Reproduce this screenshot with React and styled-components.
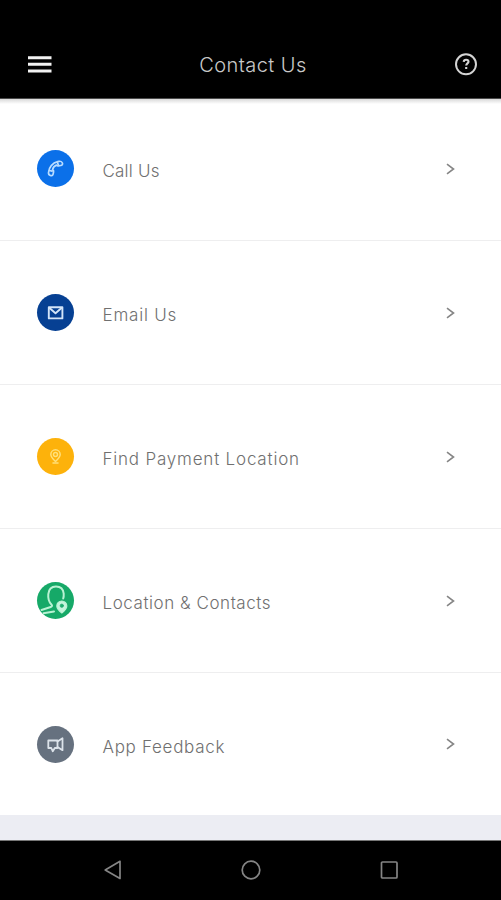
import styled, { createGlobalStyle } from 'styled-components';

const GlobalStyle = createGlobalStyle`
  * {
    box-sizing: border-box;
  }
  body {
    margin: 0;
    font-family: Inter, 'Liberation Sans', sans-serif;
  }
`;

const Screen = styled.div`
  display: flex;
  flex-direction: column;
  height: 900px;
  overflow: hidden;
  background: #ecedf3;
`;

const Header = styled.header`
  display: flex;
  align-items: center;
  justify-content: space-between;
  flex: none;
  height: 99px;
  padding: 30px 23px 0 27px;
  background: #000;
  border-bottom: 1px solid #4a4a4a;
`;

const IconButton = styled.button`
  display: flex;
  padding: 0;
  border: 0;
  background: none;
`;

const Title = styled.h1`
  margin: 0;
  padding-top: 2px;
  color: #c8c8c8;
  font-size: 20px;
  font-weight: 300;
  line-height: 24px;
  letter-spacing: 0.45px;
`;

const List = styled.main`
  flex: none;
  background: linear-gradient(#d9d9d9, #fff 5px);
`;

const Row = styled.a`
  display: flex;
  align-items: center;
  height: 144px;
  padding: 0 45px 0 37px;
  border-bottom: 1px solid #eeeeef;

  &:first-child {
    height: 142px;
    padding-bottom: 2px;
  }

  &:last-child {
    height: 142px;
    border-bottom: 0;
  }
`;

const Badge = styled.span`
  display: flex;
  flex: none;
  width: 37px;
  height: 37px;
  border-radius: 50%;
  overflow: hidden;
  background: ${({ $color }) => $color};
`;

const Label = styled.span`
  flex: 1;
  padding: 5px 0 0 28.5px;
  color: #707070;
  font-size: 17px;
  font-weight: 300;
  line-height: 20px;
  letter-spacing: ${({ $spacing }) => $spacing}px;
  white-space: nowrap;
`;

const NavBar = styled.nav`
  display: flex;
  align-items: center;
  justify-content: space-between;
  flex: none;
  height: 60px;
  margin-top: auto;
  padding: 0 102px 2px;
  background: #000;
  border-top: 1px solid #777;
`;

const Glyph = ({ children, color = '#dcecff', width = 1.4 }) => (
  <svg
    width='37'
    height='37'
    viewBox='0 0 37 37'
    fill='none'
    stroke={color}
    strokeWidth={width}
    strokeLinecap='round'
    strokeLinejoin='round'
  >
    {children}
  </svg>
);

const PhoneIcon = () => (
  <Glyph color='#b9dcff' width={1.7}>
    <path d='M11.500 22.500c.3-5.200 4-9.600 9.200-10.800l1.200-.3c1.500-.4 3.200.5 3.600 1.900.3 1.200-.5 2-1.700 2.200l-2.400.4c-1 .2-1.500-.2-2-.8-1.900.8-3.400 2.600-3.900 4.800.8.300 1.300.9 1.100 1.800l-.5 2.400c-.3 1.300-1.500 1.900-2.700 1.400-1.400-.5-2-1.700-1.900-3Z' />
    <path d='M20.500 12.500l.9 2.800M12.300 20.500l2.800.6' />
  </Glyph>
);

const MailIcon = () => (
  <Glyph color='#d3e4f8' width={1.9}>
    <rect x='11.800' y='13.200' width='13.600' height='11.200' />
    <path d='M12.500 14l6 5.200 6-5.200' />
  </Glyph>
);

const PinIcon = () => (
  <Glyph color='#ffe07a' width={1.5}>
    <path d='M18.500 23.500c-3-2.800-4.700-4.700-4.700-7a4.700 4.700 0 0 1 9.400 0c0 2.300-1.700 4.200-4.700 7Z' />
    <circle cx='18.500' cy='16.500' r='2' />
    <path d='M16 25h5' />
  </Glyph>
);

const ContactIcon = () => (
  <Glyph color='#b9f2d3' width={2}>
    <path d='M4.500 28l9.200-3c1.200-.4 1.800-1.300.9-2.200-2.700-2.600-3.700-6.400-3.300-10.600.4-4.600 3.200-7.700 7.700-7.700s7.300 3 7.700 7.200c.1 1.600 0 3.300-.5 4.800' />
    <path d='M6.500 31.300L17 29.500' />
    <path
      d='M24.800 31c-3.200-2.500-5-4.500-5-7a5 5 0 0 1 10 0c0 2.500-1.800 4.500-5 7Z'
      fill='#c5f4dc'
      strokeWidth='1.200'
    />
    <circle cx='24.800' cy='23.700' r='1.700' fill='#20ad70' stroke='#20ad70' strokeWidth='.6' />
  </Glyph>
);

const FeedbackIcon = () => (
  <Glyph color='#dce3ea' width={1.8}>
    <path d='M11.300 14.500h9.200v7.500h-2.700l-2 3.300-1.500-3.300h-3Z' />
    <path d='M20.500 15.500l5-3.300v12l-5-3.200' />
  </Glyph>
);

const items = [
  { label: 'Call Us', color: '#0b70e9', icon: PhoneIcon, spacing: 0.2 },
  { label: 'Email Us', color: '#064093', icon: MailIcon, spacing: 0.8 },
  { label: 'Find Payment Location', color: '#fdb20b', icon: PinIcon, spacing: 0.8 },
  { label: 'Location & Contacts', color: '#16a968', icon: ContactIcon, spacing: 0.55 },
  { label: 'App Feedback', color: '#66717f', icon: FeedbackIcon, spacing: 0.7 },
];

const App = () => (
  <Screen>
    <GlobalStyle />
    <Header>
      <IconButton aria-label='Menu'>
        <svg width='25' height='18' viewBox='0 0 25 18' fill='#f2f2f2'>
          <path d='M1 1.200h23.500v3H1zM1 7.800h23.500v3H1zM1 14.400h23.500v3H1z' />
        </svg>
      </IconButton>
      <Title>Contact Us</Title>
      <IconButton aria-label='Help'>
        <svg width='24' height='24' viewBox='0 0 24 24' fill='none' stroke='#d4d4d4'>
          <circle cx='12' cy='12.300' r='10' strokeWidth='2' />
          <path
            d='M9.700 9.900c.1-1.400 1-2.100 2.400-2.100s2.400.8 2.400 2c0 1.500-2.300 1.700-2.300 3.600M12.200 14.900v2'
            strokeWidth='2.100'
          />
        </svg>
      </IconButton>
    </Header>
    <List>
      {items.map(({ label, color, icon: Icon, spacing }) => (
        <Row key={label}>
          <Badge $color={color}>
            <Icon />
          </Badge>
          <Label $spacing={spacing}>{label}</Label>
          <svg width='10' height='12' viewBox='0 0 10 12' fill='none' stroke='#858585' strokeWidth='1.600'>
            <path d='M1 1.200L7.500 6 1 10.800' />
          </svg>
        </Row>
      ))}
    </List>
    <NavBar>
      <svg width='20' height='22' viewBox='0 0 20 22' fill='none' stroke='#858585' strokeWidth='1.700'>
        <path d='M18 2.300v17.200L3.200 11Z' strokeLinejoin='round' />
      </svg>
      <svg width='22' height='22' viewBox='0 0 22 22' fill='none' stroke='#858585' strokeWidth='1.700'>
        <circle cx='11' cy='11' r='8.800' />
      </svg>
      <svg width='20' height='20' viewBox='0 0 20 20' fill='none' stroke='#858585' strokeWidth='1.700'>
        <rect x='2.500' y='2' width='15.500' height='16' rx='1' />
      </svg>
    </NavBar>
  </Screen>
);

export default App;
